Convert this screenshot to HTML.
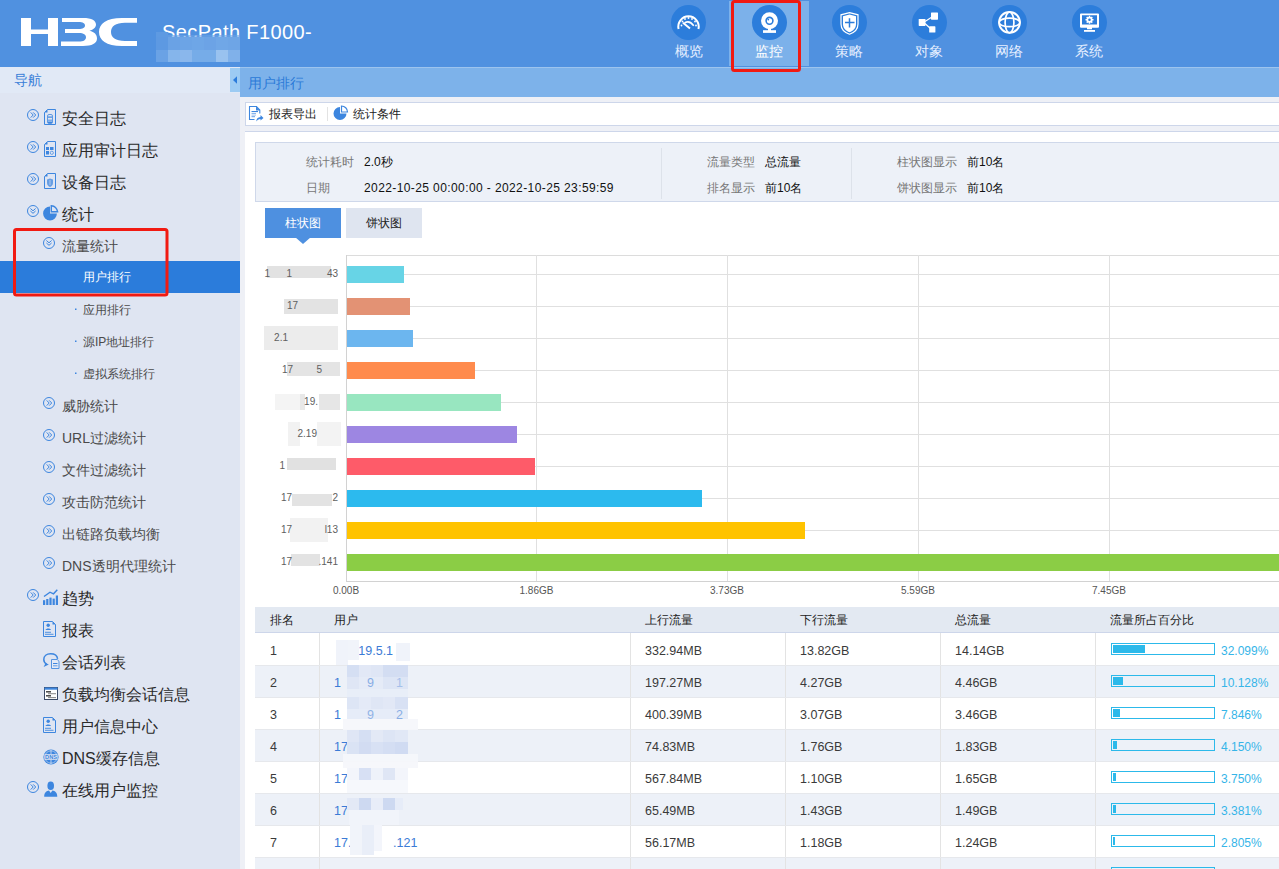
<!DOCTYPE html>
<html><head><meta charset="utf-8">
<style>
*{margin:0;padding:0;box-sizing:border-box}
html,body{width:1279px;height:869px;overflow:hidden;background:#eef0f6;font-family:"Liberation Sans",sans-serif;}
.abs{position:absolute}
#hdr{position:absolute;left:0;top:0;width:1279px;height:67px;background:#5091e0}
.nav{position:absolute;top:0;width:80px;height:66px}
.nav.act{background:#7cb1ea;top:1px;height:65px}
.nav .c{position:absolute;left:22px;top:5px;width:35px;height:35px;border-radius:50%;background:#2c7ddb}
.nav .c svg{position:absolute;left:0;top:0}
.nav .t{position:absolute;left:0;top:43px;width:80px;text-align:center;font-size:14px;line-height:16px;color:#e6efff;font-weight:500}
#side{position:absolute;left:0;top:0;width:240px;height:869px}
#side .bg{position:absolute;left:0;top:67px;width:240px;height:802px;background:#dfe5f2}
#side .hd{position:absolute;left:0;top:67px;width:240px;height:26px;background:#e1e9f6}
.tx{position:absolute;white-space:nowrap;line-height:20px}
.l1{font-size:16px;color:#2a2a2a}
.l2{font-size:14px;color:#4a4a4a}
.l3{font-size:12px;color:#4a4a4a}
#tabbar{position:absolute;left:240px;top:67px;width:1039px;height:30px;background:#7db2ea}
#main{position:absolute;left:245px;top:131px;width:1034px;height:738px;background:#fff;border-top:1px solid #d4dbea;border-left:1px solid #d4dbea}
</style></head><body>
<div id="hdr">
<svg class="abs" style="left:0;top:0" width="1279" height="66" viewBox="0 0 1279 66">
 <g fill="#fff">
  <path d="M21,18H31V29.5H48V18H58V46H48V34H31V46H21Z"/>
  <path d="M62,18H83C92,18 96,20.6 96,24.6C96,27.6 93.6,29.6 89.5,30.8C94.5,32 97,34.6 97,38.6C97,43.6 92,46 83,46H61V41.6H79C83.6,41.6 86,40 86,37.3C86,34.6 83.6,33 79,33H65V29H78.5C83,29 85,27.6 85,25.5C85,23.4 83,22.1 78.5,22.1H62Z"/>
  <path d="M137,18H122C106,18 99,24 99,32C99,40 106,46 122,46H137V41H125C115.5,41 111,37.5 111,32C111,26.5 115.5,22.8 125,22.8H137Z"/>
 </g>
</svg>
<div class="tx" style="left:162px;top:21px;font-size:20px;line-height:22px;color:#fff;letter-spacing:.4px">SecPath F1000-</div>
<div class="abs" style="left:156px;top:37px;width:12px;height:13px;background:#5d99e2"></div><div class="abs" style="left:156px;top:50px;width:12px;height:12px;background:#6aa2e5"></div><div class="abs" style="left:168px;top:37px;width:12px;height:13px;background:#6aa2e5"></div><div class="abs" style="left:168px;top:50px;width:12px;height:12px;background:#85b5eb"></div><div class="abs" style="left:180px;top:37px;width:12px;height:13px;background:#6ca4e6"></div><div class="abs" style="left:180px;top:50px;width:12px;height:12px;background:#8ab7ec"></div><div class="abs" style="left:192px;top:37px;width:12px;height:13px;background:#6ea6e7"></div><div class="abs" style="left:192px;top:50px;width:12px;height:12px;background:#76ace8"></div><div class="abs" style="left:204px;top:37px;width:12px;height:13px;background:#6ca3e6"></div><div class="abs" style="left:204px;top:50px;width:12px;height:12px;background:#76ace8"></div><div class="abs" style="left:216px;top:37px;width:12px;height:13px;background:#70a7e7"></div><div class="abs" style="left:216px;top:50px;width:12px;height:12px;background:#99c2ef"></div><div class="abs" style="left:228px;top:37px;width:12px;height:13px;background:#6ea5e6"></div><div class="abs" style="left:228px;top:50px;width:12px;height:12px;background:#80b1ea"></div><div class="abs" style="left:156px;top:32px;width:12px;height:5px;background:#5e9ae2"></div><div class="abs" style="left:168px;top:35px;width:72px;height:2px;background:#6aa2e5;opacity:.6"></div>
<div class="nav" style="left:649px"><div class="c" style="left:22px"></div><div class="t">概览</div></div>
<div class="nav act" style="left:729px"><div class="c" style="left:23px;top:4px"></div><div class="t" style="color:#fff;top:42px">监控</div></div>
<div class="nav" style="left:809px"><div class="c" style="left:23px"></div><div class="t">策略</div></div>
<div class="nav" style="left:889px"><div class="c" style="left:23px"></div><div class="t">对象</div></div>
<div class="nav" style="left:969px"><div class="c" style="left:23px"></div><div class="t">网络</div></div>
<div class="nav" style="left:1049px"><div class="c" style="left:23px"></div><div class="t">系统</div></div>
<svg class="abs" style="left:0;top:0" width="1279" height="72" viewBox="0 0 1279 72">
 <g fill="none" stroke="#fff">
  <!-- gauge -->
  <path d="M678.6,29A10.2,10.2 0 1 1 698.4,29" stroke-width="2"/>
  <path d="M684.5,23Q689.5,19.8 693.8,25.8" stroke-width="1.5"/>
  <path d="M683,22.8L690,28.6" stroke-width="1.9"/>
 </g>
 <g fill="#fff">
  <circle cx="681.5" cy="25.5" r="0.9"/><circle cx="682.5" cy="21.5" r="0.9"/><circle cx="685" cy="19" r="0.9"/><circle cx="688.5" cy="18" r="0.9"/><circle cx="692" cy="19" r="0.9"/><circle cx="695" cy="21.5" r="0.9"/><circle cx="696" cy="25.5" r="0.9"/>
  <!-- webcam -->
  <circle cx="769.5" cy="20.8" r="8.5"/>
  <rect x="768" y="28" width="3" height="3"/>
  <rect x="763" y="30.2" width="13" height="2.7"/>
  <!-- shield -->
  <path d="M849.5,14.6L856,16.2V24C856,28.5 853,31 849.5,32.3C846,31 843,28.5 843,24V16.2Z"/>
  <!-- share -->
  <rect x="931" y="12.5" width="7" height="7.2" rx="0.6"/>
  <rect x="918.7" y="19" width="6.8" height="6.9" rx="0.6"/>
  <rect x="929.2" y="26.3" width="6.2" height="6.3" rx="0.6"/>
  <!-- monitor -->
  <path fill-rule="evenodd" d="M1081,13.4H1098A1,1 0 0 1 1099,14.4V26.8A1,1 0 0 1 1098,27.8H1092V29.2H1087V27.8H1081A1,1 0 0 1 1080,26.8V14.4A1,1 0 0 1 1081,13.4ZM1082,15.2V24.6H1097V15.2Z"/>
  <rect x="1084" y="30" width="11" height="1.8"/>
 </g>
 <g fill="none" stroke="#2c7ddb">
  <circle cx="769.5" cy="20.8" r="3.4" stroke-width="1.6"/>
  <path d="M849.5,18.2V27.6M845,22.6H854.5" stroke-width="1.5"/>
 </g>
 <circle cx="768.3" cy="19.6" r="0.9" fill="#2c7ddb"/>
 <g fill="none" stroke="#fff">
  <path d="M849.5,12.6L858,14.8V24C858,29.5 854.5,32.5 849.5,34.2C844.5,32.5 841,29.5 841,24V14.8Z" stroke-width="1.2"/>
  <path d="M925,21.5L932,17M925,23.5L931,29" stroke-width="1.2"/>
  <circle cx="1009.5" cy="22.4" r="10.4" stroke-width="1.9"/>
  <ellipse cx="1009.5" cy="22.4" rx="4.4" ry="10.4" stroke-width="1.7"/>
  <ellipse cx="1009.5" cy="22.4" rx="10.4" ry="4.3" stroke-width="1.7"/>
 </g>
 <g fill="#fff">
  <circle cx="1089.5" cy="19.8" r="3"/>
 </g>
 <g stroke="#fff" stroke-width="1.5">
  <path d="M1089.5,15.8V23.8M1085.5,19.8H1093.5M1086.7,17L1092.3,22.6M1086.7,22.6L1092.3,17"/>
 </g>
 <circle cx="1089.5" cy="19.8" r="1.3" fill="#2c7ddb"/>
</svg>
</div>
<!--SIDE-->
<div id="side">
<div class="bg"></div><div class="hd"></div>
<div class="tx" style="left:14px;top:70px;font-size:14px;color:#3b80d8">导航</div>
<div class="tx l1" style="left:62px;top:109px">安全日志</div>
<div class="tx l1" style="left:62px;top:141px">应用审计日志</div>
<div class="tx l1" style="left:62px;top:173px">设备日志</div>
<div class="tx l1" style="left:62px;top:205px">统计</div>
<div class="tx l2" style="left:62px;top:236px">流量统计</div>
<div class="abs" style="left:0;top:261px;width:240px;height:32px;background:#2b7cdb"></div>
<div class="tx l3" style="left:83px;top:267px;color:#fff;font-weight:500">用户排行</div>
<div class="tx l3" style="left:83px;top:300px">应用排行</div>
<div class="tx l3" style="left:83px;top:332px">源IP地址排行</div>
<div class="tx l3" style="left:83px;top:364px">虚拟系统排行</div>
<div class="tx l2" style="left:62px;top:396px">威胁统计</div>
<div class="tx l2" style="left:62px;top:428px">URL过滤统计</div>
<div class="tx l2" style="left:62px;top:460px">文件过滤统计</div>
<div class="tx l2" style="left:62px;top:492px">攻击防范统计</div>
<div class="tx l2" style="left:62px;top:524px">出链路负载均衡</div>
<div class="tx l2" style="left:62px;top:556px">DNS透明代理统计</div>
<div class="tx l1" style="left:62px;top:589px">趋势</div>
<div class="tx l1" style="left:62px;top:621px">报表</div>
<div class="tx l1" style="left:62px;top:653px">会话列表</div>
<div class="tx l1" style="left:62px;top:685px">负载均衡会话信息</div>
<div class="tx l1" style="left:62px;top:717px">用户信息中心</div>
<div class="tx l1" style="left:62px;top:749px">DNS缓存信息</div>
<div class="tx l1" style="left:62px;top:781px">在线用户监控</div>
<svg class="abs" style="left:0;top:0" width="240" height="869" viewBox="0 0 240 869"><circle cx="33" cy="115" r="5.5" fill="none" stroke="#3d86df" stroke-width="1"/><path d="M30.7,112.4L33.2,115L30.7,117.6M33.2,112.4L35.7,115L33.2,117.6" fill="none" stroke="#3d86df" stroke-width="1"/><path d="M47.5,109.5H55.5V124.5H44.5V112.5Z" fill="none" stroke="#3d86df" stroke-width="1"/><path d="M44.5,112.5L47.5,109.5V112.5Z" fill="#3d86df"/><rect x="47.5" y="114.5" width="5" height="9" rx="1.5" fill="none" stroke="#3d86df" stroke-width="1" opacity=".8"/><rect x="48" y="116.5" width="4" height="1.2" fill="#3d86df"/><rect x="48" y="119.5" width="4" height="1.5" fill="#3d86df" opacity=".6"/><rect x="48" y="121.5" width="4" height="1.5" fill="#3d86df"/><circle cx="33" cy="147" r="5.5" fill="none" stroke="#3d86df" stroke-width="1"/><path d="M30.7,144.4L33.2,147L30.7,149.6M33.2,144.4L35.7,147L33.2,149.6" fill="none" stroke="#3d86df" stroke-width="1"/><path d="M47.5,141.5H55.5V156.5H44.5V144.5Z" fill="none" stroke="#3d86df" stroke-width="1"/><path d="M44.5,144.5L47.5,141.5V144.5Z" fill="#3d86df"/><rect x="46" y="147" width="3" height="3" fill="#3d86df"/><rect x="50" y="147" width="3.5" height="3" fill="#3d86df"/><rect x="46" y="151" width="3" height="3.5" fill="#3d86df"/><circle cx="51.8" cy="152.8" r="1.6" fill="none" stroke="#3d86df" stroke-width="1" opacity=".7"/><circle cx="33" cy="179" r="5.5" fill="none" stroke="#3d86df" stroke-width="1"/><path d="M30.7,176.4L33.2,179L30.7,181.6M33.2,176.4L35.7,179L33.2,181.6" fill="none" stroke="#3d86df" stroke-width="1"/><path d="M47.5,173.5H55.5V188.5H44.5V176.5Z" fill="none" stroke="#3d86df" stroke-width="1"/><path d="M44.5,176.5L47.5,173.5V176.5Z" fill="#3d86df"/><path d="M50,178.5L53,179.5V183C53,185 51.5,186.5 50,187C48.5,186.5 47,185 47,183V179.5Z" fill="#3d86df" opacity=".75"/><path d="M50,180V185" stroke="#dfe5f2" stroke-width="1" opacity=".6"/><circle cx="33" cy="211" r="5.5" fill="none" stroke="#3d86df" stroke-width="1"/><path d="M30.4,208.5L33,210.8L35.6,208.5M30.4,211L33,213.3L35.6,211" fill="none" stroke="#3d86df" stroke-width="1"/><path d="M50,213.5V206.6A6.9,6.9 0 1 0 56.9,213.5Z" fill="#3d86df"/><path d="M51.3,205.7V211.7H57.6C57,208.5 54.5,206 51.3,205.7Z" fill="none" stroke="#3d86df" stroke-width="1.4"/><circle cx="49" cy="243" r="5.5" fill="none" stroke="#3d86df" stroke-width="1"/><path d="M46.4,240.5L49,242.8L51.6,240.5M46.4,243L49,245.3L51.6,243" fill="none" stroke="#3d86df" stroke-width="1"/><rect x="75" y="308.5" width="1.5" height="1.5" fill="#3d86df"/><rect x="75" y="340.5" width="1.5" height="1.5" fill="#3d86df"/><rect x="75" y="372.5" width="1.5" height="1.5" fill="#3d86df"/><circle cx="49" cy="403" r="5.5" fill="none" stroke="#3d86df" stroke-width="1"/><path d="M46.7,400.4L49.2,403L46.7,405.6M49.2,400.4L51.7,403L49.2,405.6" fill="none" stroke="#3d86df" stroke-width="1"/><circle cx="49" cy="435" r="5.5" fill="none" stroke="#3d86df" stroke-width="1"/><path d="M46.7,432.4L49.2,435L46.7,437.6M49.2,432.4L51.7,435L49.2,437.6" fill="none" stroke="#3d86df" stroke-width="1"/><circle cx="49" cy="467" r="5.5" fill="none" stroke="#3d86df" stroke-width="1"/><path d="M46.7,464.4L49.2,467L46.7,469.6M49.2,464.4L51.7,467L49.2,469.6" fill="none" stroke="#3d86df" stroke-width="1"/><circle cx="49" cy="499" r="5.5" fill="none" stroke="#3d86df" stroke-width="1"/><path d="M46.7,496.4L49.2,499L46.7,501.6M49.2,496.4L51.7,499L49.2,501.6" fill="none" stroke="#3d86df" stroke-width="1"/><circle cx="49" cy="531" r="5.5" fill="none" stroke="#3d86df" stroke-width="1"/><path d="M46.7,528.4L49.2,531L46.7,533.6M49.2,528.4L51.7,531L49.2,533.6" fill="none" stroke="#3d86df" stroke-width="1"/><circle cx="49" cy="563" r="5.5" fill="none" stroke="#3d86df" stroke-width="1"/><path d="M46.7,560.4L49.2,563L46.7,565.6M49.2,560.4L51.7,563L49.2,565.6" fill="none" stroke="#3d86df" stroke-width="1"/><circle cx="33" cy="595" r="5.5" fill="none" stroke="#3d86df" stroke-width="1"/><path d="M30.7,592.4L33.2,595L30.7,597.6M33.2,592.4L35.7,595L33.2,597.6" fill="none" stroke="#3d86df" stroke-width="1"/><rect x="43" y="600.2" width="2.2" height="4.8" fill="#3d86df"/><rect x="46.2" y="599" width="2.2" height="6" fill="#3d86df"/><rect x="49.4" y="597.6" width="2.2" height="7.4" fill="#3d86df"/><rect x="52.6" y="598.6" width="2.2" height="6.4" fill="#3d86df"/><rect x="55.8" y="595.5" width="2.2" height="9.5" fill="#3d86df"/><path d="M44,596.5L50,592.2L53.5,593.8L57.3,589.8" fill="none" stroke="#3d86df" stroke-width="1.4"/><path d="M43.5,621.5H52.5L55.5,624.5V636.5H43.5Z" fill="none" stroke="#3d86df" stroke-width="1"/><path d="M52.5,621.5L55.5,624.5H52.5Z" fill="#3d86df"/><circle cx="48.2" cy="625.3" r="1.7" fill="#3d86df"/><path d="M45.5,630C46,628 50.5,628 51,630Z" fill="#3d86df"/><rect x="45" y="631.8" width="6" height="0.9" fill="#3d86df"/><rect x="45" y="633.8" width="8.5" height="0.9" fill="#3d86df"/><path d="M57.6,658.8C57.2,655.6 54.4,653.8 50.6,653.8C46.6,653.8 43.8,656.2 43.8,659.6C43.8,661.6 44.8,663.2 46.6,664.2" fill="none" stroke="#3d86df" stroke-width="1.5"/><path d="M45.6,663L43.6,667L48.8,664.6Z" fill="#3d86df"/><path d="M51.5,659.5H57.2L59,661.3V668.5H51.5Z" fill="#e4ebf8" stroke="#3d86df" stroke-width="1" opacity=".85"/><rect x="53" y="663" width="4.5" height="1" fill="#3d86df"/><rect x="53" y="665.3" width="4.5" height="1" fill="#3d86df" opacity=".8"/><rect x="44.5" y="687.5" width="13" height="12" fill="#fff" stroke="#3b4a66" stroke-width="1"/><rect x="44.5" y="687.5" width="13" height="2.2" fill="#3d86df"/><rect x="46" y="691.3" width="5" height="1.1" fill="#000"/><rect x="48" y="693.3" width="8" height="0.9" fill="#777"/><rect x="46" y="695.3" width="5" height="1.1" fill="#000"/><rect x="48" y="697.2" width="8" height="0.9" fill="#777"/><path d="M43.5,717.5H52.5L55.5,720.5V732.5H43.5Z" fill="none" stroke="#3d86df" stroke-width="1"/><path d="M52.5,717.5L55.5,720.5H52.5Z" fill="#3d86df"/><circle cx="48.2" cy="721.3" r="1.7" fill="#3d86df"/><path d="M45.5,726C46,724 50.5,724 51,726Z" fill="#3d86df"/><rect x="45" y="727.8" width="6" height="0.9" fill="#3d86df"/><rect x="45" y="729.8" width="8.5" height="0.9" fill="#3d86df"/><circle cx="51" cy="757" r="7.6" fill="#3d86df"/><circle cx="51" cy="757" r="6.2" fill="none" stroke="#dfe5f2" stroke-width=".6"/><rect x="44.5" y="754.2" width="13" height="5.6" fill="#dfe5f2"/><text x="51" y="759.2" font-size="5.6" font-family="Liberation Sans" font-weight="bold" text-anchor="middle" fill="#3d86df">DNS</text><path d="M51,750V754M51,760V764" stroke="#dfe5f2" stroke-width=".8"/><circle cx="33" cy="787" r="5.5" fill="none" stroke="#3d86df" stroke-width="1"/><path d="M30.7,784.4L33.2,787L30.7,789.6M33.2,784.4L35.7,787L33.2,789.6" fill="none" stroke="#3d86df" stroke-width="1"/><ellipse cx="50.7" cy="785.8" rx="3.3" ry="4.3" fill="#3d86df"/><path d="M44.2,796.8C44.2,792.5 46.5,791 49,790.6L50.7,793L52.4,790.6C55,791 57.3,792.5 57.3,796.8Z" fill="#3d86df"/></svg>
</div>
<!--/SIDE-->
<!--MAIN-->
<div class="abs" style="left:240px;top:67px;width:1039px;height:30px;background:#7db2ea;border-top:1px solid #9dc4ee"></div>
<div class="tx" style="left:248px;top:73px;font-size:14px;color:#2b7ad8">用户排行</div>
<div class="abs" style="left:230px;top:68px;width:10px;height:24px;background:#9ccbf3"></div>
<svg class="abs" style="left:230px;top:68px" width="10" height="24"><path d="M3,12L7,8.3V15.7Z" fill="#2b7cdb"/></svg>
<div class="abs" style="left:240px;top:97px;width:1039px;height:772px;background:#eef0f6"></div>
<div class="abs" style="left:245px;top:102px;width:1034px;height:24px;background:#fff;border:1px solid #cdd6ea;border-right:none"></div>
<div class="abs" style="left:327px;top:107px;width:1px;height:14px;background:#e3e3e3"></div>
<div class="tx" style="left:269px;top:104px;font-size:12px;color:#222">报表导出</div>
<div class="tx" style="left:353px;top:104px;font-size:12px;color:#222">统计条件</div>
<svg class="abs" style="left:0;top:0" width="420" height="130">
<path d="M257,106.5H249.5V119.5H254.5" fill="none" stroke="#3d86df" stroke-width="1.1"/>
<path d="M256.3,106.5L259.8,110V113.5" fill="none" stroke="#3d86df" stroke-width="1.1"/>
<path d="M256,106.5L260,110.5H256Z" fill="#3d86df"/>
<rect x="251.5" y="111" width="6.5" height="1.1" fill="#3d86df"/><rect x="251.5" y="113" width="4.5" height="1" fill="#3d86df" opacity=".6"/><rect x="251.5" y="114.6" width="4.5" height="1" fill="#3d86df" opacity=".5"/><rect x="251.5" y="116.2" width="3.5" height="1" fill="#3d86df" opacity=".8"/>
<path d="M256.3,121.5C256.3,118.8 257.8,117.2 260.5,117V115L263.5,117.9L260.5,120.6V119C258.6,119 257.3,120 256.3,121.5Z" fill="#3d86df"/>
<path d="M340,113.5V107A6.5,6.5 0 1 0 346.5,113.5Z" fill="#3d86df"/>
<path d="M341.5,106V112H347.5A6,6 0 0 0 341.5,106Z" fill="none" stroke="#3d86df" stroke-width="1.2"/>
</svg>
<div class="abs" style="left:245px;top:131px;width:1034px;height:738px;background:#fff;border-top:1px solid #cdd6ea"></div>
<div class="abs" style="left:255px;top:142px;width:1024px;height:60px;background:#edf1f8;border:1px solid #cfd8ea;border-right:none"></div>
<div class="abs" style="left:661px;top:148px;width:1px;height:51px;background:#dde2ea"></div>
<div class="abs" style="left:851px;top:148px;width:1px;height:51px;background:#dde2ea"></div>
<div class="tx" style="right:925px;top:152px;font-size:12px;color:#777">统计耗时</div>
<div class="tx" style="left:364px;top:152px;font-size:12px;color:#111">2.0秒</div>
<div class="tx" style="right:949px;top:178px;font-size:12px;color:#777">日期</div>
<div class="tx" style="left:364px;top:178px;font-size:12px;color:#111"><span style="letter-spacing:.4px">2022-10-25 00:00:00 - 2022-10-25 23:59:59</span></div>
<div class="tx" style="right:524px;top:152px;font-size:12px;color:#777">流量类型</div>
<div class="tx" style="left:765px;top:152px;font-size:12px;color:#111">总流量</div>
<div class="tx" style="right:524px;top:178px;font-size:12px;color:#777">排名显示</div>
<div class="tx" style="left:765px;top:178px;font-size:12px;color:#111">前10名</div>
<div class="tx" style="right:322px;top:152px;font-size:12px;color:#777">柱状图显示</div>
<div class="tx" style="left:967px;top:152px;font-size:12px;color:#111">前10名</div>
<div class="tx" style="right:322px;top:178px;font-size:12px;color:#777">饼状图显示</div>
<div class="tx" style="left:967px;top:178px;font-size:12px;color:#111">前10名</div>
<div class="abs" style="left:265px;top:208px;width:76px;height:30px;background:#4e90e0"></div>
<svg class="abs" style="left:295px;top:237px" width="16" height="8"><path d="M0,0H16L8,7Z" fill="#4e90e0"/></svg>
<div class="tx" style="left:265px;top:213px;width:76px;text-align:center;font-size:12px;color:#fff;font-weight:500">柱状图</div>
<div class="abs" style="left:346px;top:208px;width:76px;height:30px;background:#dfe5f0"></div>
<div class="tx" style="left:346px;top:213px;width:76px;text-align:center;font-size:12px;color:#222">饼状图</div>
<svg class="abs" style="left:0;top:0" width="1279" height="600" viewBox="0 0 1279 600">
<g fill="#e0e0e0"><rect x="346" y="255" width="933" height="1" fill="#dcdcdc"/><rect x="346" y="274" width="933" height="1"/><rect x="346" y="306" width="933" height="1"/><rect x="346" y="338" width="933" height="1"/><rect x="346" y="370" width="933" height="1"/><rect x="346" y="402" width="933" height="1"/><rect x="346" y="434" width="933" height="1"/><rect x="346" y="466" width="933" height="1"/><rect x="346" y="498" width="933" height="1"/><rect x="346" y="530" width="933" height="1"/><rect x="346" y="562" width="933" height="1"/><rect x="536" y="255" width="1" height="326"/><rect x="727" y="255" width="1" height="326"/><rect x="918" y="255" width="1" height="326"/><rect x="1109" y="255" width="1" height="326"/></g><rect x="346" y="255" width="1" height="327" fill="#d2d2d2"/><rect x="346" y="581" width="933" height="1" fill="#d2d2d2"/><rect x="347" y="266" width="57" height="17" fill="#67d4e6"/><rect x="347" y="298" width="63" height="17" fill="#e39274"/><rect x="347" y="330" width="66" height="17" fill="#6cb6ef"/><rect x="347" y="362" width="128" height="17" fill="#ff8b4d"/><rect x="347" y="394" width="154" height="17" fill="#98e6c0"/><rect x="347" y="426" width="170" height="17" fill="#9d86e2"/><rect x="347" y="458" width="188" height="17" fill="#fe5b69"/><rect x="347" y="490" width="355" height="17" fill="#2cbaee"/><rect x="347" y="522" width="458" height="17" fill="#ffc300"/><rect x="347" y="554" width="932" height="17" fill="#8bcd45"/></svg>
<div class="tx" style="left:306px;top:581px;width:80px;text-align:center;font-size:10px;color:#555">0.00B</div>
<div class="tx" style="left:496.5px;top:581px;width:80px;text-align:center;font-size:10px;color:#555">1.86GB</div>
<div class="tx" style="left:687px;top:581px;width:80px;text-align:center;font-size:10px;color:#555">3.73GB</div>
<div class="tx" style="left:878px;top:581px;width:80px;text-align:center;font-size:10px;color:#555">5.59GB</div>
<div class="tx" style="left:1069px;top:581px;width:80px;text-align:center;font-size:10px;color:#555">7.45GB</div>
<div class="abs" style="left:267px;top:266px;width:64px;height:12px;background:#e2e2e2"></div>
<div class="abs" style="left:284px;top:299px;width:54px;height:15px;background:#e3e3e3"></div>
<div class="abs" style="left:264px;top:326px;width:74px;height:24px;background:#ececec"></div>
<div class="abs" style="left:287px;top:362px;width:53px;height:14px;background:#e4e4e4"></div>
<div class="abs" style="left:275px;top:394px;width:25px;height:16px;background:#f4f4f4"></div>
<div class="abs" style="left:319px;top:394px;width:21px;height:16px;background:#e6e6e6"></div>
<div class="abs" style="left:300px;top:394px;width:5px;height:16px;background:#e8e8e8"></div>
<div class="abs" style="left:288px;top:422px;width:12px;height:24px;background:#f2f2f2"></div>
<div class="abs" style="left:317px;top:422px;width:24px;height:24px;background:#f3f3f3"></div>
<div class="abs" style="left:287px;top:458px;width:49px;height:12px;background:#e1e1e1"></div>
<div class="abs" style="left:292px;top:494px;width:40px;height:12px;background:#e3e3e3"></div>
<div class="abs" style="left:290px;top:518px;width:38px;height:24px;background:#f2f2f2"></div>
<div class="abs" style="left:291px;top:554px;width:29px;height:12px;background:#e3e3e3"></div>
<div class="tx" style="right:1009px;top:264px;font-size:10px;color:#606060">1</div>
<div class="tx" style="right:987px;top:264px;font-size:10px;color:#606060">1</div>
<div class="tx" style="right:941px;top:264px;font-size:10px;color:#606060">43</div>
<div class="tx" style="right:981px;top:296px;font-size:10px;color:#606060">17</div>
<div class="tx" style="right:991px;top:328px;font-size:10px;color:#606060">2.1</div>
<div class="tx" style="right:986px;top:360px;font-size:10px;color:#606060">17</div>
<div class="tx" style="right:957px;top:360px;font-size:10px;color:#606060">5</div>
<div class="tx" style="right:961px;top:392px;font-size:10px;color:#606060">19.</div>
<div class="tx" style="right:962px;top:424px;font-size:10px;color:#606060">2.19</div>
<div class="tx" style="right:994px;top:456px;font-size:10px;color:#606060">1</div>
<div class="tx" style="right:987px;top:488px;font-size:10px;color:#606060">17</div>
<div class="tx" style="right:941px;top:488px;font-size:10px;color:#606060">2</div>
<div class="tx" style="right:987px;top:520px;font-size:10px;color:#606060">17</div>
<div class="tx" style="right:941px;top:520px;font-size:10px;color:#606060">l13</div>
<div class="tx" style="right:987px;top:552px;font-size:10px;color:#606060">17</div>
<div class="tx" style="right:941px;top:552px;font-size:10px;color:#606060">.141</div>
<div class="abs" style="left:255px;top:607px;width:1024px;height:26px;background:#e3e9f2;border-bottom:1px solid #cdd6ea"></div>
<div class="abs" style="left:255px;top:633px;width:1024px;height:32px;background:#fff"></div>
<div class="abs" style="left:255px;top:665px;width:1024px;height:32px;background:#edf1f8"></div>
<div class="abs" style="left:255px;top:697px;width:1024px;height:32px;background:#fff"></div>
<div class="abs" style="left:255px;top:729px;width:1024px;height:32px;background:#edf1f8"></div>
<div class="abs" style="left:255px;top:761px;width:1024px;height:32px;background:#fff"></div>
<div class="abs" style="left:255px;top:793px;width:1024px;height:32px;background:#edf1f8"></div>
<div class="abs" style="left:255px;top:825px;width:1024px;height:32px;background:#fff"></div>
<div class="abs" style="left:255px;top:857px;width:1024px;height:32px;background:#edf1f8"></div>
<svg class="abs" style="left:0;top:0" width="1279" height="869"><g fill="#e3e3e3"><rect x="319" y="633" width="1" height="236"/><rect x="630" y="633" width="1" height="236"/><rect x="785" y="633" width="1" height="236"/><rect x="940" y="633" width="1" height="236"/><rect x="1095" y="633" width="1" height="236"/><rect x="255" y="665" width="1024" height="1" fill="#e6e8ec"/><rect x="255" y="697" width="1024" height="1" fill="#e6e8ec"/><rect x="255" y="729" width="1024" height="1" fill="#e6e8ec"/><rect x="255" y="761" width="1024" height="1" fill="#e6e8ec"/><rect x="255" y="793" width="1024" height="1" fill="#e6e8ec"/><rect x="255" y="825" width="1024" height="1" fill="#e6e8ec"/><rect x="255" y="857" width="1024" height="1" fill="#e6e8ec"/></g><rect x="1111.5" y="643.5" width="103" height="11" fill="none" stroke="#2cb9ea" stroke-width="1"/><rect x="1113" y="645" width="32" height="8" fill="#2cb9ea"/><rect x="1111.5" y="675.5" width="103" height="11" fill="none" stroke="#2cb9ea" stroke-width="1"/><rect x="1113" y="677" width="10" height="8" fill="#2cb9ea"/><rect x="1111.5" y="707.5" width="103" height="11" fill="none" stroke="#2cb9ea" stroke-width="1"/><rect x="1113" y="709" width="7" height="8" fill="#2cb9ea"/><rect x="1111.5" y="739.5" width="103" height="11" fill="none" stroke="#2cb9ea" stroke-width="1"/><rect x="1113" y="741" width="4" height="8" fill="#2cb9ea"/><rect x="1111.5" y="771.5" width="103" height="11" fill="none" stroke="#2cb9ea" stroke-width="1"/><rect x="1113" y="773" width="3" height="8" fill="#2cb9ea"/><rect x="1111.5" y="803.5" width="103" height="11" fill="none" stroke="#2cb9ea" stroke-width="1"/><rect x="1113" y="805" width="3" height="8" fill="#2cb9ea"/><rect x="1111.5" y="835.5" width="103" height="11" fill="none" stroke="#2cb9ea" stroke-width="1"/><rect x="1113" y="837" width="2" height="8" fill="#2cb9ea"/><rect x="1111.5" y="867.5" width="103" height="11" fill="none" stroke="#2cb9ea" stroke-width="1"/><rect x="1113" y="869" width="2" height="8" fill="#2cb9ea"/></svg>
<div class="tx" style="left:270px;top:610px;font-size:12px;color:#222">排名</div>
<div class="tx" style="left:334px;top:610px;font-size:12px;color:#222">用户</div>
<div class="tx" style="left:645px;top:610px;font-size:12px;color:#222">上行流量</div>
<div class="tx" style="left:800px;top:610px;font-size:12px;color:#222">下行流量</div>
<div class="tx" style="left:955px;top:610px;font-size:12px;color:#222">总流量</div>
<div class="tx" style="left:1110px;top:610px;font-size:12px;color:#222">流量所占百分比</div>
<div class="tx" style="left:270px;top:641px;font-size:12.5px;color:#3a3a3a">1</div>
<div class="tx" style="left:645px;top:641px;font-size:12.5px;color:#3a3a3a">332.94MB</div>
<div class="tx" style="left:800px;top:641px;font-size:12.5px;color:#3a3a3a">13.82GB</div>
<div class="tx" style="left:955px;top:641px;font-size:12.5px;color:#3a3a3a">14.14GB</div>
<div class="tx" style="left:1221px;top:641px;font-size:12px;color:#36b5e8">32.099%</div>
<div class="tx" style="left:334px;top:641px;font-size:12.5px;color:#3b7bd6">&nbsp;&nbsp;&nbsp;&nbsp;&nbsp;&nbsp;&nbsp;19.5.1</div>
<div class="tx" style="left:270px;top:673px;font-size:12.5px;color:#3a3a3a">2</div>
<div class="tx" style="left:645px;top:673px;font-size:12.5px;color:#3a3a3a">197.27MB</div>
<div class="tx" style="left:800px;top:673px;font-size:12.5px;color:#3a3a3a">4.27GB</div>
<div class="tx" style="left:955px;top:673px;font-size:12.5px;color:#3a3a3a">4.46GB</div>
<div class="tx" style="left:1221px;top:673px;font-size:12px;color:#36b5e8">10.128%</div>
<div class="tx" style="left:334px;top:673px;font-size:12.5px;color:#3b7bd6">1</div>
<div class="tx" style="left:270px;top:705px;font-size:12.5px;color:#3a3a3a">3</div>
<div class="tx" style="left:645px;top:705px;font-size:12.5px;color:#3a3a3a">400.39MB</div>
<div class="tx" style="left:800px;top:705px;font-size:12.5px;color:#3a3a3a">3.07GB</div>
<div class="tx" style="left:955px;top:705px;font-size:12.5px;color:#3a3a3a">3.46GB</div>
<div class="tx" style="left:1221px;top:705px;font-size:12px;color:#36b5e8">7.846%</div>
<div class="tx" style="left:334px;top:705px;font-size:12.5px;color:#3b7bd6">1</div>
<div class="tx" style="left:270px;top:737px;font-size:12.5px;color:#3a3a3a">4</div>
<div class="tx" style="left:645px;top:737px;font-size:12.5px;color:#3a3a3a">74.83MB</div>
<div class="tx" style="left:800px;top:737px;font-size:12.5px;color:#3a3a3a">1.76GB</div>
<div class="tx" style="left:955px;top:737px;font-size:12.5px;color:#3a3a3a">1.83GB</div>
<div class="tx" style="left:1221px;top:737px;font-size:12px;color:#36b5e8">4.150%</div>
<div class="tx" style="left:334px;top:737px;font-size:12.5px;color:#3b7bd6">17</div>
<div class="tx" style="left:270px;top:769px;font-size:12.5px;color:#3a3a3a">5</div>
<div class="tx" style="left:645px;top:769px;font-size:12.5px;color:#3a3a3a">567.84MB</div>
<div class="tx" style="left:800px;top:769px;font-size:12.5px;color:#3a3a3a">1.10GB</div>
<div class="tx" style="left:955px;top:769px;font-size:12.5px;color:#3a3a3a">1.65GB</div>
<div class="tx" style="left:1221px;top:769px;font-size:12px;color:#36b5e8">3.750%</div>
<div class="tx" style="left:334px;top:769px;font-size:12.5px;color:#3b7bd6">17</div>
<div class="tx" style="left:270px;top:801px;font-size:12.5px;color:#3a3a3a">6</div>
<div class="tx" style="left:645px;top:801px;font-size:12.5px;color:#3a3a3a">65.49MB</div>
<div class="tx" style="left:800px;top:801px;font-size:12.5px;color:#3a3a3a">1.43GB</div>
<div class="tx" style="left:955px;top:801px;font-size:12.5px;color:#3a3a3a">1.49GB</div>
<div class="tx" style="left:1221px;top:801px;font-size:12px;color:#36b5e8">3.381%</div>
<div class="tx" style="left:334px;top:801px;font-size:12.5px;color:#3b7bd6">17</div>
<div class="tx" style="left:270px;top:833px;font-size:12.5px;color:#3a3a3a">7</div>
<div class="tx" style="left:645px;top:833px;font-size:12.5px;color:#3a3a3a">56.17MB</div>
<div class="tx" style="left:800px;top:833px;font-size:12.5px;color:#3a3a3a">1.18GB</div>
<div class="tx" style="left:955px;top:833px;font-size:12.5px;color:#3a3a3a">1.24GB</div>
<div class="tx" style="left:1221px;top:833px;font-size:12px;color:#36b5e8">2.805%</div>
<div class="tx" style="left:334px;top:833px;font-size:12.5px;color:#3b7bd6">17.&nbsp;&nbsp;&nbsp;&nbsp;&nbsp;&nbsp;&nbsp;&nbsp;&nbsp;&nbsp;&nbsp;&nbsp;.121</div>
<div class="abs" style="left:336px;top:640px;width:12px;height:25px;background:#eef2fa;opacity:0.9"></div>
<div class="abs" style="left:348px;top:640px;width:11px;height:20px;background:#f0f3fa;opacity:0.9"></div>
<div class="abs" style="left:396px;top:643px;width:14px;height:18px;background:#eef2fa;opacity:0.9"></div>
<div class="abs" style="left:347px;top:665px;width:12px;height:12px;background:#d5dff3;opacity:1"></div>
<div class="abs" style="left:359px;top:665px;width:12px;height:12px;background:#e2e8f6;opacity:1"></div>
<div class="abs" style="left:371px;top:665px;width:12px;height:12px;background:#dfe6f5;opacity:1"></div>
<div class="abs" style="left:383px;top:665px;width:12px;height:12px;background:#d3ddf2;opacity:1"></div>
<div class="abs" style="left:395px;top:665px;width:13px;height:12px;background:#d3ddf2;opacity:1"></div>
<div class="abs" style="left:347px;top:677px;width:12px;height:12px;background:#dfe6f5;opacity:1"></div>
<div class="abs" style="left:359px;top:677px;width:24px;height:12px;background:#e5ebf7;opacity:1"></div>
<div class="abs" style="left:383px;top:677px;width:25px;height:12px;background:#dde5f5;opacity:1"></div>
<div class="abs" style="left:347px;top:689px;width:61px;height:8px;background:#e8edf8;opacity:0.95"></div>
<div class="abs" style="left:347px;top:697px;width:12px;height:12px;background:#dde5f5;opacity:1"></div>
<div class="abs" style="left:359px;top:697px;width:12px;height:12px;background:#e4eaf7;opacity:1"></div>
<div class="abs" style="left:371px;top:697px;width:12px;height:12px;background:#dfe6f5;opacity:1"></div>
<div class="abs" style="left:383px;top:697px;width:12px;height:12px;background:#e2e8f6;opacity:1"></div>
<div class="abs" style="left:395px;top:697px;width:13px;height:12px;background:#d8e1f4;opacity:1"></div>
<div class="abs" style="left:347px;top:709px;width:61px;height:10px;background:#e6ecf8;opacity:1"></div>
<div class="abs" style="left:343px;top:719px;width:75px;height:11px;background:#f5f7fb;opacity:0.95"></div>
<div class="abs" style="left:347px;top:730px;width:12px;height:12px;background:#dfe6f5;opacity:1"></div>
<div class="abs" style="left:359px;top:730px;width:12px;height:12px;background:#d5dff3;opacity:1"></div>
<div class="abs" style="left:371px;top:730px;width:12px;height:12px;background:#e3e9f6;opacity:1"></div>
<div class="abs" style="left:383px;top:730px;width:12px;height:12px;background:#dde5f5;opacity:1"></div>
<div class="abs" style="left:395px;top:730px;width:13px;height:12px;background:#e1e8f6;opacity:1"></div>
<div class="abs" style="left:347px;top:742px;width:12px;height:12px;background:#dae3f4;opacity:1"></div>
<div class="abs" style="left:359px;top:742px;width:12px;height:12px;background:#d2dcf2;opacity:1"></div>
<div class="abs" style="left:371px;top:742px;width:12px;height:12px;background:#d8e1f4;opacity:1"></div>
<div class="abs" style="left:383px;top:742px;width:12px;height:12px;background:#d4def3;opacity:1"></div>
<div class="abs" style="left:395px;top:742px;width:13px;height:12px;background:#d0dbf2;opacity:1"></div>
<div class="abs" style="left:343px;top:754px;width:75px;height:14px;background:#f5f7fb;opacity:0.95"></div>
<div class="abs" style="left:347px;top:768px;width:12px;height:12px;background:#f3f5fb;opacity:1"></div>
<div class="abs" style="left:359px;top:768px;width:12px;height:12px;background:#d7e0f4;opacity:1"></div>
<div class="abs" style="left:371px;top:768px;width:12px;height:12px;background:#eef2fa;opacity:1"></div>
<div class="abs" style="left:383px;top:768px;width:12px;height:12px;background:#dfe6f5;opacity:1"></div>
<div class="abs" style="left:395px;top:768px;width:13px;height:12px;background:#f3f5fb;opacity:1"></div>
<div class="abs" style="left:347px;top:780px;width:61px;height:13px;background:#f6f8fc;opacity:1"></div>
<div class="abs" style="left:347px;top:798px;width:12px;height:12px;background:#e3e9f6;opacity:1"></div>
<div class="abs" style="left:359px;top:798px;width:12px;height:12px;background:#cdd9f1;opacity:1"></div>
<div class="abs" style="left:371px;top:798px;width:12px;height:12px;background:#e8edf8;opacity:1"></div>
<div class="abs" style="left:383px;top:798px;width:12px;height:12px;background:#cdd9f1;opacity:1"></div>
<div class="abs" style="left:395px;top:798px;width:8px;height:12px;background:#e6ecf8;opacity:1"></div>
<div class="abs" style="left:349px;top:810px;width:50px;height:15px;background:#f1f4fa;opacity:1"></div>
<div class="abs" style="left:350px;top:825px;width:12px;height:30px;background:#f1f4fa;opacity:1"></div>
<div class="abs" style="left:362px;top:825px;width:12px;height:30px;background:#e9eef8;opacity:1"></div>
<div class="abs" style="left:374px;top:825px;width:8px;height:26px;background:#f3f5fb;opacity:1"></div>
<div class="tx" style="left:367px;top:673px;font-size:12.5px;color:#3b7bd6;opacity:0.55">9</div>
<div class="tx" style="left:396px;top:673px;font-size:12.5px;color:#3b7bd6;opacity:0.35">1</div>
<div class="tx" style="left:367px;top:705px;font-size:12.5px;color:#3b7bd6;opacity:0.5">9</div>
<div class="tx" style="left:396px;top:705px;font-size:12.5px;color:#3b7bd6;opacity:0.55">2</div>
<!--/MAIN-->
<svg class="abs" style="left:0;top:0;z-index:10" width="1279" height="300" viewBox="0 0 1279 300">
 <rect x="732.5" y="1.5" width="67" height="69" rx="2" fill="none" stroke="#f11a12" stroke-width="3"/>
 <rect x="14.5" y="229.5" width="152.5" height="65.5" rx="2" fill="none" stroke="#f11a12" stroke-width="3"/>
</svg>
</body></html>
